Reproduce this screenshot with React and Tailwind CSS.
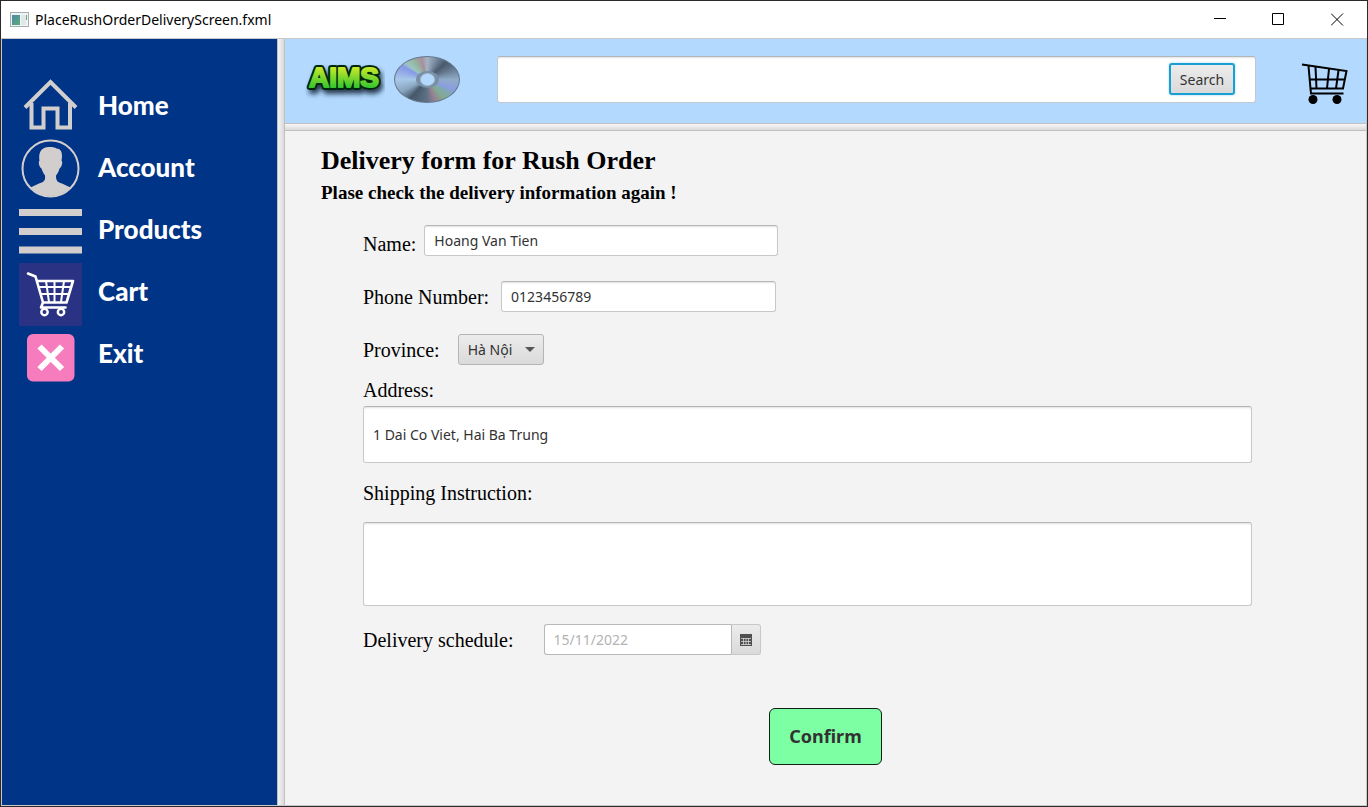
import React from "react";

const field =
  "rounded-[3px] border border-[#c8c8c8] border-t-[#b5b5b5] bg-white px-[9px] font-['Noto_Sans','Open_Sans',sans-serif] text-[14px] text-[#323232] shadow-[inset_0_2px_2px_-1px_#e0e0e0] outline-none";
const label = "text-[20px] leading-6 text-black";

function HomeIcon() {
  return (
    <svg width="63" height="63" viewBox="0 0 63 63" fill="none" stroke="#d3cece" strokeWidth="4" aria-hidden="true">
      <path d="M6 33.500L31.500 8L57 33.500" />
      <path d="M12.500 29V53.500H24.500V34.500H38.500V53.500H51V29" />
    </svg>
  );
}

function AccountIcon() {
  return (
    <svg width="63" height="63" viewBox="0 0 63 63" aria-hidden="true">
      <circle cx="31.500" cy="31.500" r="28" fill="none" stroke="#d3cece" strokeWidth="2" />
      <path
        fill="#d3cece"
        d="M31.500 10C23 9 19 15 20.500 23.500C19 25 20 30 22.500 31.500C23.500 35 25 37 26 38.500C26.500 44 25 45 20 46.500L11.500 50.500A28 28 0 0 0 51.500 50.500L43 46.500C38 45 37 43.500 37 38.500C39 36 40 34 40.500 31.500C43 30 44 25 42.500 23.500C44 16 42 11.500 37.500 11.500C36 10.500 34 10 31.500 10Z"
      />
    </svg>
  );
}

function ProductsIcon() {
  return (
    <svg width="63" height="63" viewBox="0 0 63 63" fill="#d3cece" aria-hidden="true">
      <path d="M0 9h63v7H0zM0 28h63v7H0zM0 46.500h63v7H0z" />
    </svg>
  );
}

function CartIcon() {
  return (
    <svg width="63" height="63" viewBox="0 0 63 63" fill="none" stroke="#fff" aria-hidden="true">
      <rect width="63" height="63" fill="#2a3383" stroke="none" />
      <path strokeWidth="2.600" strokeLinecap="round" strokeLinejoin="round" d="M9 10.500L16.500 13.500L24 39.500H47.500L54 18H18M24 39.500L22 44.500H46.500" />
      <path strokeWidth="2" d="M20 24H51.500M22 31H50M27 18L30 39M35.500 18V39M45 18L42 39" />
      <circle cx="25.500" cy="49" r="3.200" strokeWidth="2.400" />
      <circle cx="42" cy="49" r="3.200" strokeWidth="2.400" />
    </svg>
  );
}

function ExitIcon() {
  return (
    <svg width="63" height="63" viewBox="0 0 63 63" aria-hidden="true">
      <rect x="8" y="8" width="47.500" height="47.500" rx="6" fill="#f67cbd" />
      <path d="M20.500 20.500L43 43M43 20.500L20.500 43" stroke="#fff" strokeWidth="6" />
    </svg>
  );
}

function AimsLogo() {
  return (
    <svg className="shrink-0" width="80" height="47" viewBox="0 0 80 47" role="img" aria-label="AIMS">
      <defs>
        <linearGradient id="lime" x1="0" y1="0" x2="0" y2="1">
          <stop offset="0.200" stopColor="#c3e82a" />
          <stop offset="0.850" stopColor="#2fc42f" />
        </linearGradient>
        <filter id="soft" x="-20%" y="-20%" width="140%" height="150%">
          <feDropShadow dx="2" dy="4" stdDeviation="2.500" floodColor="#0a1a30" floodOpacity="0.850" />
        </filter>
      </defs>
      <g
        className="font-['Liberation_Sans_Narrow','Liberation_Sans',sans-serif] text-[28px] font-bold"
        textAnchor="middle"
        strokeLinejoin="round"
      >
        <text x="39" y="31" fill="#06280d" stroke="#06280d" strokeWidth="6" filter="url(#soft)">AIMS</text>
        <text x="39" y="31" fill="url(#lime)" stroke="url(#lime)" strokeWidth="2" aria-hidden="true">AIMS</text>
      </g>
    </svg>
  );
}

function Disc() {
  return (
    <div
      aria-hidden="true"
      className="ml-[9px] grid h-[47px] w-[66px] shrink-0 place-items-center rounded-[50%] border border-[#64788c] bg-[conic-gradient(#a4b5c4_0deg,#8094a8_20deg,#495a6c_48deg,#60748a_65deg,#90abc8_90deg,#8b9de0_112deg,#80a8b5_120deg,#83aa90_138deg,#967f92_160deg,#617487_178deg,#46576a_222deg,#8aa6c0_245deg,#a8c8e8_270deg,#8598e8_298deg,#9dc4c4_307deg,#94b6a0_325deg,#a98d9d_345deg,#a4b5c4_360deg)]"
    >
      <div className="grid h-[17px] w-[23px] place-items-center rounded-[50%] bg-[#7890a7]">
        <div className="h-[13px] w-[15px] rounded-[50%] border border-[#a9bdd0] bg-[#b3d9ff]" />
      </div>
    </div>
  );
}

function HeaderCart() {
  return (
    <svg width="47" height="50" viewBox="0 -1 47 50" fill="none" stroke="#000" strokeWidth="2" aria-hidden="true">
      <path d="M1 9.500L45.500 16L42 33.500H9.500L7.500 11M9.500 33.500L10 38.500H42.500" />
      <path d="M8 24.500H43.500M14.500 12L15.500 33.500M28 14L26 33.500M37.500 15.500L35 33.500" />
      <circle cx="12" cy="44.500" r="4.500" fill="#000" stroke="none" />
      <circle cx="36" cy="44.500" r="4.500" fill="#000" stroke="none" />
    </svg>
  );
}

const links = ["Home", "Account", "Products", "Cart", "Exit"];

export default function App() {
  return (
    <div className="flex min-h-screen flex-col border border-[#2b292b] bg-[#f3f3f3]">
      <header className="flex h-[38px] shrink-0 items-center border-b border-[#c8c8c8] bg-white pl-[9px]">
        <svg width="19" height="15" viewBox="0 0 19 15" aria-hidden="true">
          <defs>
            <linearGradient id="pane" x1="0" y1="0" x2="1" y2="1">
              <stop offset="0" stopColor="#4b8aa8" />
              <stop offset="1" stopColor="#5bab78" />
            </linearGradient>
          </defs>
          <rect x="0.500" y="0.500" width="18" height="14" fill="#f1f4f5" stroke="#a6adb3" />
          <rect x="2" y="3" width="8" height="10" fill="url(#pane)" />
          <rect x="11" y="3" width="5" height="10" fill="#e2e8ea" />
          <path d="M16.500 3v5" stroke="#69ad7f" />
        </svg>
        <h1 className="ml-[6px] flex-1 font-['Noto_Sans','Open_Sans',sans-serif] text-[14px] leading-5 text-black">
          PlaceRushOrderDeliveryScreen.fxml
        </h1>
        <div className="flex h-full">
          <button type="button" aria-label="Minimize" className="grid w-[58px] place-items-center">
            <svg width="13" height="13" viewBox="0 0 13 13" stroke="#000"><path d="M0 5.500h12" /></svg>
          </button>
          <button type="button" aria-label="Maximize" className="grid w-[58px] place-items-center">
            <svg width="13" height="13" viewBox="0 0 13 13" fill="none" stroke="#000"><path d="M0.500 0.500h11v11h-11z" /></svg>
          </button>
          <button type="button" aria-label="Close" className="grid w-[60px] place-items-center">
            <svg width="13" height="13" viewBox="0 0 13 13" stroke="#000"><path d="M0 0.500l12 12M12 0.500l-12 12" /></svg>
          </button>
        </div>
      </header>

      <div className="flex flex-1 border-x border-b border-[#c8c8c8]">
        <nav className="flex w-[275px] shrink-0 bg-[#003486] pl-[17px]">
          <div className="flex w-[63px] flex-col pt-[35px]">
            <HomeIcon />
            <AccountIcon />
            <ProductsIcon />
            <CartIcon />
            <ExitIcon />
          </div>
          <ul className="flex flex-col pt-[35px] pl-4">
            {links.map((name) => (
              <li key={name} className="flex h-[62px] items-center">
                <a href={"#" + name.toLowerCase()} className="font-['Lato',sans-serif] text-[26px] leading-8 font-black text-white">
                  {name}
                </a>
              </li>
            ))}
          </ul>
        </nav>
        <div className="w-2 shrink-0 border-x border-[#c0c0c0] bg-linear-to-r from-[#f4f4f4] to-[#dadada]" />

        <div className="flex min-w-0 flex-1 flex-col">
          <div className="flex h-[84px] shrink-0 items-center bg-[#b3d9ff] pr-[18px] pb-1 pl-5">
            <AimsLogo />
            <Disc />
            <form className="ml-[37px] flex h-[47px] flex-1 items-center rounded-[3px] border border-[#c2c8ce] border-t-[#b0b5ba] bg-white pr-5 shadow-[inset_0_2px_2px_-1px_#e0e0e0]">
              <input aria-label="Search products" className="h-full min-w-0 flex-1 px-[9px] text-[14px] outline-none" />
              <button
                type="button"
                className="h-8 w-[66px] rounded-[3px] border-2 border-[#1a9fd2] bg-linear-to-b from-[#ececec] to-[#dadada] font-['Noto_Sans','Open_Sans',sans-serif] text-[14px] text-[#323232] shadow-[0_0_2px_#7cc8e6]"
              >
                Search
              </button>
            </form>
            <button type="button" aria-label="Open cart" className="ml-[45px]">
              <HeaderCart />
            </button>
          </div>
          <div className="h-2 shrink-0 border-y border-[#c0c0c0] bg-linear-to-b from-[#f8f8f8] to-[#dadada]" />

          <main className="flex-1 pt-[14px] pb-10 pl-9 font-['Liberation_Serif',serif]">
            <h2 className="text-[26px] leading-8 font-bold text-black">Delivery form for Rush Order</h2>
            <p className="mt-1 text-[19px] leading-6 font-bold text-black">Plase check the delivery information again !</p>

            <form className="mt-5 mr-[114px] ml-[42px] flex flex-col">
              <div className="flex items-end gap-2">
                <label htmlFor="name" className={label}>Name:</label>
                <input id="name" defaultValue="Hoang Van Tien" className={field + " h-[31px] w-[354px]"} />
              </div>
              <div className="mt-[25px] flex items-center gap-3">
                <label htmlFor="phone" className={label}>Phone Number:</label>
                <input id="phone" defaultValue="0123456789" className={field + " h-[31px] w-[275px]"} />
              </div>
              <div className="mt-[22px] flex items-center gap-[18px]">
                <label htmlFor="province" className={label}>Province:</label>
                <div className="relative">
                  <select
                    id="province"
                    className="block h-[31px] w-[86px] appearance-none rounded-[3px] border border-[#b5b5b5] bg-linear-to-b from-[#ececec] to-[#dadada] px-[9px] font-['Noto_Sans','Open_Sans',sans-serif] text-[14px] text-[#323232]"
                  >
                    <option>Hà Nội</option>
                  </select>
                  <svg className="pointer-events-none absolute top-[13px] right-[9px]" width="10" height="5" viewBox="0 0 10 5" fill="#555" aria-hidden="true">
                    <path d="M0 0h10L5 5z" />
                  </svg>
                </div>
              </div>
              <label htmlFor="address" className={label + " mt-[13px]"}>Address:</label>
              <input id="address" defaultValue="1 Dai Co Viet, Hai Ba Trung" className={field + " mt-1 h-[57px]"} />
              <label htmlFor="shipping" className={label + " mt-[18px]"}>Shipping Instruction:</label>
              <textarea id="shipping" className={field + " mt-[17px] h-[84px] resize-none"} />
              <div className="mt-[18px] flex items-center gap-[30px]">
                <label htmlFor="schedule" className={label}>Delivery schedule:</label>
                <div className="flex h-[31px]">
                  <input
                    id="schedule"
                    placeholder="15/11/2022"
                    className="w-[187px] rounded-l-[3px] border border-r-0 border-[#b8b8b8] bg-white px-[9px] font-['Noto_Sans','Open_Sans',sans-serif] text-[14px] outline-none placeholder:text-[#b3b3b3]"
                  />
                  <button
                    type="button"
                    aria-label="Pick a date"
                    className="grid w-[30px] place-items-center rounded-r-[3px] border border-[#c8c8c8] border-l-[#b8b8b8] bg-linear-to-b from-[#ececec] to-[#dadada]"
                  >
                    <svg width="12" height="12" viewBox="0 0 12 12" aria-hidden="true">
                      <path fill="#505050" d="M0 0h12v12H0z" />
                      <path stroke="#e4e4e4" d="M1 4.500h10M1 7.500h10M1 10.500h10" strokeWidth="0.700" />
                      <path stroke="#e4e4e4" d="M3.500 4v7M6 4v7M8.500 4v7" strokeWidth="0.700" />
                    </svg>
                  </button>
                </div>
              </div>
              <button
                type="button"
                className="mt-[53px] ml-[406px] h-[57px] w-[113px] rounded-[6px] border border-[#102015] bg-[#7dffa3] font-['Noto_Sans','Open_Sans',sans-serif] text-[18px] font-bold text-[#323232]"
              >
                Confirm
              </button>
            </form>
          </main>
        </div>
      </div>
    </div>
  );
}
